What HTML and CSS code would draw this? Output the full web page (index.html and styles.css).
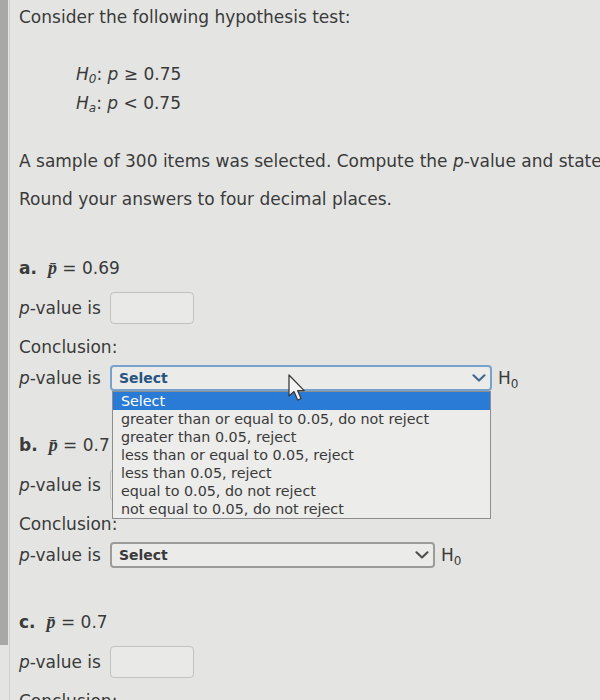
FILE: index.html
```html
<!DOCTYPE html>
<html lang="en">
<head>
<meta charset="utf-8">
<title>Hypothesis test</title>
<link rel="stylesheet" href="styles.css">
</head>
<body>
<div class="page">
  <div class="rail"><div class="rail-bar"></div></div>
  <main class="content">
    <p class="title">Consider the following hypothesis test:</p>
    <div class="hyp">
      <p class="hyp-line first"><i>H</i><sub>0</sub>: <i>p</i> ≥ 0.75</p>
      <p class="hyp-line"><i>H</i><sub>a</sub>: <i>p</i> &lt; 0.75</p>
    </div>
    <p class="intro">A sample of 300 items was selected. Compute the <i>p</i>-value and state your conclusion for each of the following results. Use α = 0.05.</p>
    <p class="round">Round your answers to four decimal places.</p>

    <section class="part part-a">
      <p class="part-head"><b class="part-letter">a.</b><span class="pbar">p&#772;</span> = 0.69</p>
      <div class="answer-row"><span class="lbl"><i>p</i>-value is</span><span class="input-box"></span></div>
      <p class="concl">Conclusion:</p>
      <div class="select-row">
        <span class="lbl"><i>p</i>-value is</span>
        <div class="select open">
          <span>Select</span>
          <svg class="chev" width="14" height="8" viewBox="0 0 14 8"><polyline points="1.5,1.3 7,6.5 12.5,1.3" fill="none" stroke="#41698f" stroke-width="2.2" stroke-linecap="round" stroke-linejoin="round"/></svg>
          <ul class="dropdown">
            <li class="opt active">Select</li>
            <li class="opt">greater than or equal to 0.05, do not reject</li>
            <li class="opt">greater than 0.05, reject</li>
            <li class="opt">less than or equal to 0.05, reject</li>
            <li class="opt">less than 0.05, reject</li>
            <li class="opt">equal to 0.05, do not reject</li>
            <li class="opt">not equal to 0.05, do not reject</li>
          </ul>
          <svg class="cursor" width="20" height="29" viewBox="0 0 20 29"><path d="M1 1 L1 22 L6 17.6 L9.6 26 L13 24.6 L9.6 16.6 L16.2 16.6 Z" fill="#f4f4f4" stroke="#3c3c3c" stroke-width="1.3" stroke-linejoin="round"/></svg>
        </div>
        <span class="h0">H<sub>0</sub></span>
      </div>
    </section>

    <section class="part part-b">
      <p class="part-head"><b class="part-letter">b.</b><span class="pbar">p&#772;</span> = 0.7</p>
      <div class="answer-row"><span class="lbl"><i>p</i>-value is</span><span class="input-box"></span></div>
      <p class="concl">Conclusion:</p>
      <div class="select-row">
        <span class="lbl"><i>p</i>-value is</span>
        <div class="select closed">
          <span>Select</span>
          <svg class="chev" width="14" height="8" viewBox="0 0 14 8"><polyline points="1.5,1.3 7,6.5 12.5,1.3" fill="none" stroke="#505050" stroke-width="2.2" stroke-linecap="round" stroke-linejoin="round"/></svg>
        </div>
        <span class="h0">H<sub>0</sub></span>
      </div>
    </section>

    <section class="part part-c">
      <p class="part-head"><b class="part-letter">c.</b><span class="pbar">p&#772;</span> = 0.7</p>
      <div class="answer-row"><span class="lbl"><i>p</i>-value is</span><span class="input-box"></span></div>
      <p class="concl">Conclusion:</p>
    </section>
  </main>
</div>
</body>
</html>
```

FILE: styles.css
```css
html, body {
  margin: 0;
  padding: 0;
  overflow: hidden;
  background: #e4e5e3;
}

body {
  width: 600px;
  height: 700px;
  font-family: "DejaVu Sans", Verdana, sans-serif;
  font-size: 17px;
  color: #3a3a3a;
}

.page {
  display: flex;
  height: 700px;
}

.rail {
  flex: none;
  width: 10px;
  box-sizing: border-box;
  border-right: 1px solid #d0d1cf;
}

.rail-bar {
  width: 8px;
  height: 645px;
  background: #a8a9a7;
}

.content {
  flex: 1;
  min-width: 0;
  padding-left: 9px;
}

p {
  margin: 0;
  line-height: 20px;
}

.title {
  margin-top: 7px;
}

.hyp {
  padding-left: 57px;
}

.hyp-line.first {
  margin-top: 37px;
}

.hyp-line + .hyp-line {
  margin-top: 9px;
}

.hyp-line sub {
  font-size: 12px;
  font-style: italic;
  vertical-align: -3px;
  line-height: 0;
}

.intro {
  margin-top: 38px;
  white-space: nowrap;
}

.round {
  margin-top: 18px;
}

.part {
  display: flex;
  flex-direction: column;
}

.part-a {
  margin-top: 49px;
}

.part-b {
  margin-top: 44px;
}

.part-c {
  margin-top: 44px;
}

.part-letter {
  margin-right: 11px;
}

.pbar {
  font-family: "Liberation Serif", "DejaVu Serif", serif;
  font-style: italic;
  font-weight: bold;
  font-size: 18px;
}

.answer-row {
  display: flex;
  align-items: center;
  height: 32px;
  margin-top: 14px;
}

.input-box {
  width: 84px;
  height: 32px;
  box-sizing: border-box;
  margin-left: 9px;
  border: 1px solid #c2c2c1;
  border-radius: 4px;
  background: #e9e9e8;
}

.concl {
  margin-top: 13px;
}

.select-row {
  display: flex;
  align-items: center;
  height: 26px;
  margin-top: 8px;
}

.select {
  position: relative;
  display: flex;
  align-items: center;
  justify-content: space-between;
  box-sizing: border-box;
  height: 26px;
  margin-left: 9px;
  padding: 0 4px 0 7px;
  border: 2px solid #9b9b9a;
  border-radius: 4px;
  background: #ebebea;
  font-size: 14px;
  font-weight: bold;
}

.select.open {
  width: 382px;
  border-color: #76a2cb;
  color: #28547f;
}

.select.closed {
  width: 325px;
  color: #3a3a3a;
}

.chev {
  display: block;
}

.h0 {
  margin-left: 6px;
}

.h0 sub {
  font-size: 12px;
  vertical-align: -4px;
  line-height: 0;
}

.dropdown {
  position: absolute;
  left: 0;
  top: 24px;
  width: 379px;
  box-sizing: border-box;
  margin: 0;
  padding: 0;
  list-style: none;
  border: 1px solid #8e8e8e;
  background: #ececeb;
  font-weight: normal;
  font-size: 14.3px;
  color: #3a3a3a;
  z-index: 5;
}

.opt {
  height: 18px;
  line-height: 18px;
  padding-left: 8px;
  white-space: nowrap;
}

.opt.active {
  background: #2a7bd6;
  color: #ffffff;
}

.cursor {
  position: absolute;
  left: 176px;
  top: 7px;
  z-index: 6;
}
```
